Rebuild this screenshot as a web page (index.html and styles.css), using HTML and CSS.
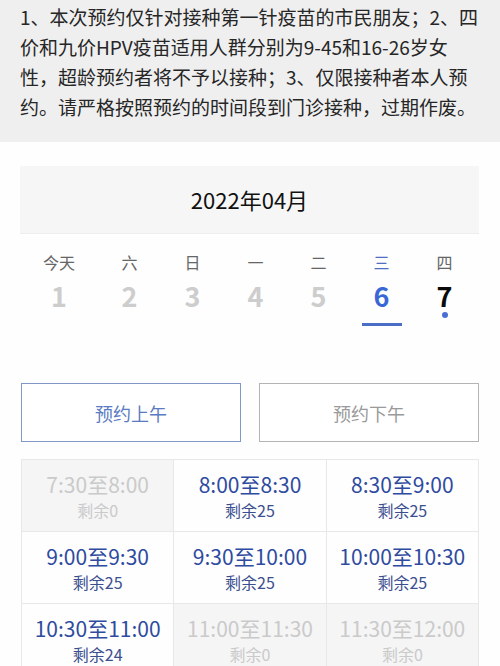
FILE: index.html
```html
<!DOCTYPE html>
<html lang="zh-CN">
<head>
<meta charset="UTF-8">
<meta name="viewport" content="width=device-width, initial-scale=1.0">
<title>疫苗预约</title>
<link rel="stylesheet" href="styles.css">
</head>
<body>
<div class="notice">
    1、本次预约仅针对接种第一针疫苗的市民朋友；2、四价和九价HPV疫苗适用人群分别为9-45和16-26岁女性，超龄预约者将不予以接种；3、仅限接种者本人预约。请严格按照预约的时间段到门诊接种，过期作废。
</div>
<div class="main">
    <div class="month">2022年04月</div>
    <div class="week">
        <div class="day past"><span class="label">今天</span><span class="num">1</span></div>
        <div class="day past"><span class="label">六</span><span class="num">2</span></div>
        <div class="day past"><span class="label">日</span><span class="num">3</span></div>
        <div class="day past"><span class="label">一</span><span class="num">4</span></div>
        <div class="day past"><span class="label">二</span><span class="num">5</span></div>
        <div class="day active"><span class="label">三</span><span class="num">6</span><span class="bar"></span></div>
        <div class="day open"><span class="label">四</span><span class="num">7</span><span class="dot"></span></div>
    </div>
    <div class="halves">
        <button class="half selected">预约上午</button>
        <button class="half">预约下午</button>
    </div>
    <div class="slots">
        <div class="slot full"><div class="time">7:30至8:00</div><div class="left">剩余0</div></div>
        <div class="slot"><div class="time">8:00至8:30</div><div class="left">剩余25</div></div>
        <div class="slot"><div class="time">8:30至9:00</div><div class="left">剩余25</div></div>
        <div class="slot"><div class="time">9:00至9:30</div><div class="left">剩余25</div></div>
        <div class="slot"><div class="time">9:30至10:00</div><div class="left">剩余25</div></div>
        <div class="slot"><div class="time">10:00至10:30</div><div class="left">剩余25</div></div>
        <div class="slot"><div class="time">10:30至11:00</div><div class="left">剩余24</div></div>
        <div class="slot full"><div class="time">11:00至11:30</div><div class="left">剩余0</div></div>
        <div class="slot full"><div class="time">11:30至12:00</div><div class="left">剩余0</div></div>
    </div>
</div>
</body>
</html>
```

FILE: styles.css
```css
body {
    font-family: "Noto Sans CJK SC", "Noto Sans", sans-serif;
    margin: 0;
    padding: 0;
    background-color: #fefefe;
    color: #222;
}
.notice {
    background-color: #efefef;
    padding: 2px 20px 20px;
    font-size: 19px;
    line-height: 30px;
    color: #262626;
}
.main {
    padding: 24px 21px 0 20px;
}
.month {
    height: 67px;
    line-height: 66px;
    background-color: #f6f6f6;
    border-bottom: 1px solid #ededed;
    text-align: center;
    font-size: 22px;
    color: #111;
}
.week {
    display: grid;
    grid-template-columns: 78px repeat(6, 63px);
    padding-top: 17px;
    height: 149px;
    box-sizing: border-box;
}
.day {
    display: flex;
    flex-direction: column;
    align-items: center;
}
.label {
    font-size: 16px;
    line-height: 22px;
    color: #666;
}
.num {
    font-size: 27px;
    font-weight: bold;
    line-height: 30px;
    margin-top: 8px;
    color: #cdcdcd;
}
.active .label {
    color: #4e6fc2;
}
.active .num {
    color: #3a67d6;
}
.open .num {
    color: #0a0a0a;
}
.bar {
    width: 40px;
    height: 3px;
    margin-top: 12px;
    background-color: #4a6dc6;
}
.dot {
    width: 6px;
    height: 6px;
    margin-top: 1px;
    border-radius: 50%;
    background-color: #4a6fd4;
}
.halves {
    display: grid;
    grid-template-columns: 1fr 1fr;
    gap: 18px;
    padding-left: 1px;
}
.half {
    height: 59px;
    background-color: #fff;
    border: 1px solid #b4b4b4;
    font-family: inherit;
    font-size: 18px;
    color: #9a9a9a;
    cursor: pointer;
}
.half.selected {
    border-color: #8197c6;
    color: #5a7bc2;
}
.slots {
    display: grid;
    grid-template-columns: repeat(3, 1fr);
    margin-top: 17px;
    margin-left: 1px;
    border-top: 1px solid #e8e8e8;
    border-left: 1px solid #e8e8e8;
}
.slot {
    height: 72px;
    box-sizing: border-box;
    padding-top: 11px;
    border-right: 1px solid #e8e8e8;
    border-bottom: 1px solid #e8e8e8;
    text-align: center;
    color: #2f4b9f;
}
.time {
    font-size: 21px;
    line-height: 26px;
}
.left {
    font-size: 16px;
    line-height: 26px;
    color: #3b4f8e;
}
.slot.full {
    background-color: #f5f5f5;
    color: #cacaca;
}
.slot.full .left {
    color: #cacaca;
}
```
